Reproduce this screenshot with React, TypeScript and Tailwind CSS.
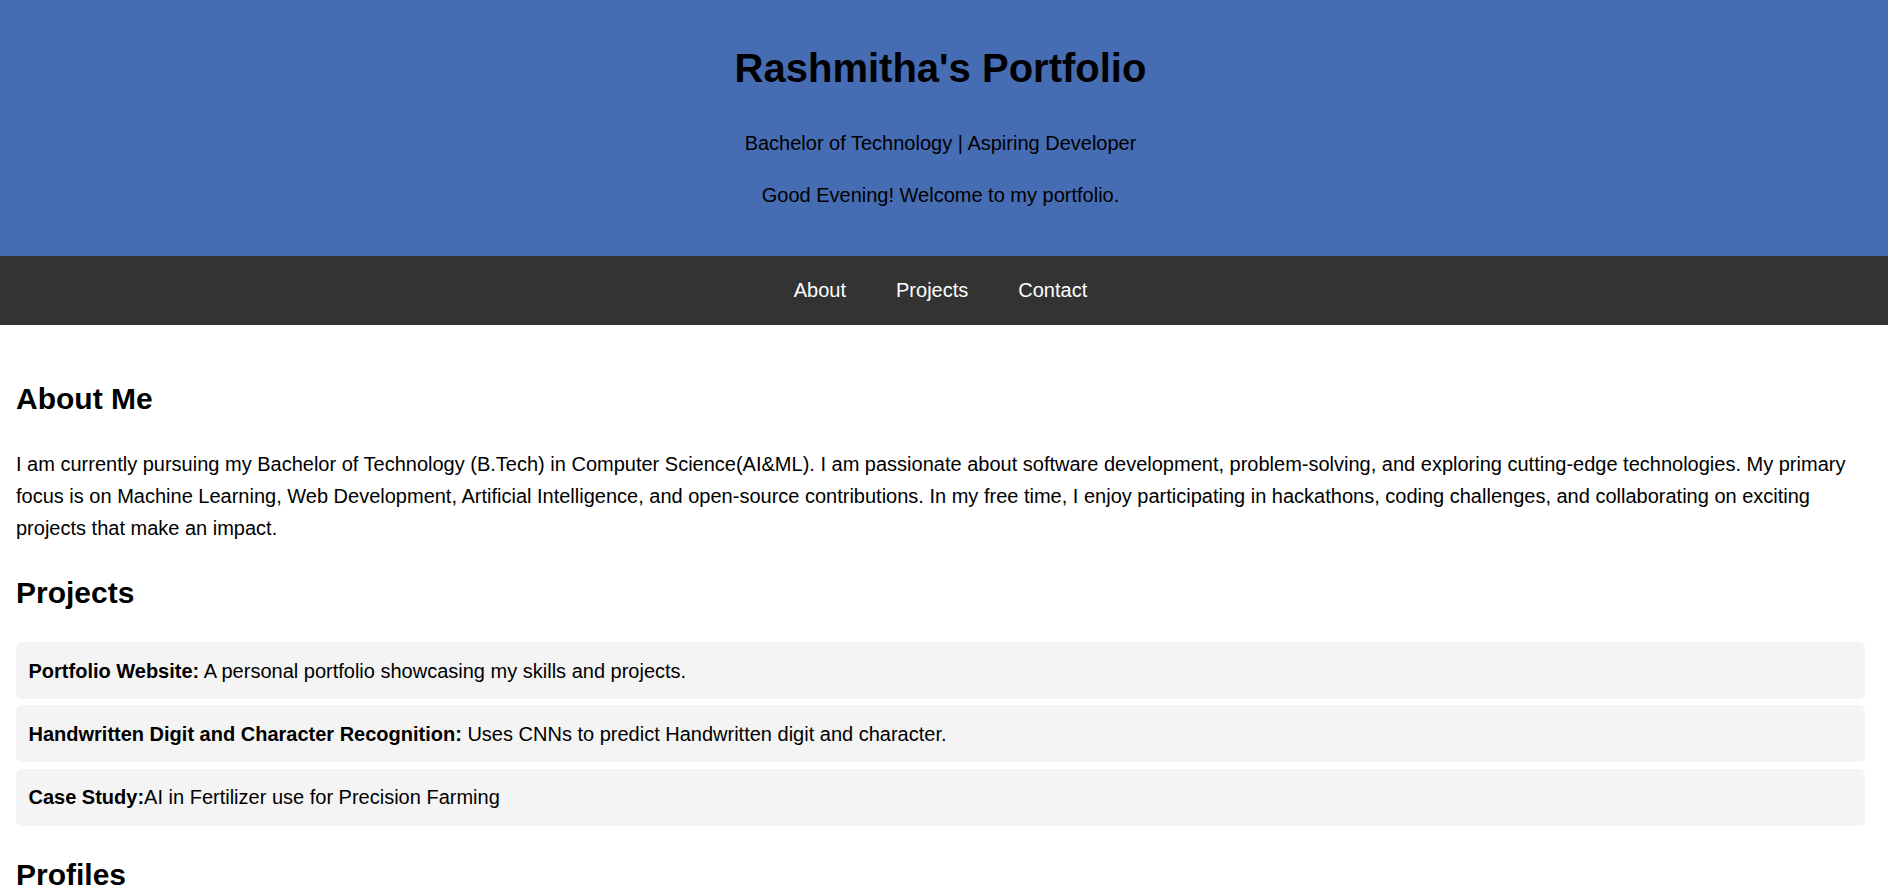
import React from "react";

interface Project {
  title: string;
  description: string;
  space: boolean;
}

const projects: Project[] = [
  {
    title: "Portfolio Website:",
    description: "A personal portfolio showcasing my skills and projects.",
    space: true,
  },
  {
    title: "Handwritten Digit and Character Recognition:",
    description: "Uses CNNs to predict Handwritten digit and character.",
    space: true,
  },
  {
    title: "Case Study:",
    description: "AI in Fertilizer use for Precision Farming",
    space: false,
  },
];

const navLinks = ["About", "Projects", "Contact"];

const App: React.FC = () => {
  return (
    <div
      className="min-h-screen bg-white text-black text-[20px] leading-[1.6]"
      style={{ fontFamily: '"Liberation Sans", Arial, sans-serif' }}
    >
      <header className="bg-[#466cb3] pt-[36px] pb-[45px]">
        <div className="pr-[7px] text-center">
          <h1 className="m-0 mb-[27px] text-[40px] font-bold leading-[64px]">
            Rashmitha's Portfolio
          </h1>
          <p className="m-0 mb-[20px]">
            Bachelor of Technology | Aspiring Developer
          </p>
          <p className="m-0">Good Evening! Welcome to my portfolio.</p>
        </div>
      </header>

      <nav className="bg-[#333333] pt-[18px] pb-[19px]">
        <div className="pr-[7px] flex justify-center">
          {navLinks.map((link) => (
            <a
              key={link}
              href={`#${link.toLowerCase()}`}
              className="mx-[25px] text-white no-underline"
            >
              {link}
            </a>
          ))}
        </div>
      </nav>

      <main className="pl-[16px] pr-[23px] pt-[50px] pb-[25px]">
        <section id="about">
          <h2 className="m-0 mb-[25px] text-[30px] font-bold leading-[48px]">
            About Me
          </h2>
          <p className="m-0 mb-[25px]">
            I am currently pursuing my Bachelor of Technology (B.Tech) in
            Computer Science(AI&amp;ML). I am passionate about software
            development, problem-solving, and exploring cutting-edge
            technologies. My primary focus is on Machine Learning, Web
            Development, Artificial Intelligence, and open-source contributions.
            In my free time, I enjoy participating in hackathons, coding
            challenges, and collaborating on exciting projects that make an
            impact.
          </p>
        </section>

        <section id="projects">
          <h2 className="m-0 mb-[25px] text-[30px] font-bold leading-[48px]">
            Projects
          </h2>
          <ul className="m-0 mb-[25px] p-0 list-none flex flex-col gap-[6.25px]">
            {projects.map((item) => (
              <li
                key={item.title}
                className="bg-[#f4f4f4] rounded-[6px] px-[12.5px] py-[12.5px]"
              >
                <strong className="font-bold">{item.title}</strong>
                {item.space ? " " : ""}
                {item.description}
              </li>
            ))}
          </ul>
        </section>

        <section id="contact">
          <h2 className="m-0 mb-[25px] text-[30px] font-bold leading-[48px]">
            Profiles
          </h2>
          <ul className="m-0 p-0 list-none flex flex-col gap-[6.25px]">
            <li className="bg-[#f4f4f4] rounded-[6px] p-[12.5px]">GitHub</li>
            <li className="bg-[#f4f4f4] rounded-[6px] p-[12.5px]">LinkedIn</li>
          </ul>
        </section>
      </main>
    </div>
  );
};

export default App;
